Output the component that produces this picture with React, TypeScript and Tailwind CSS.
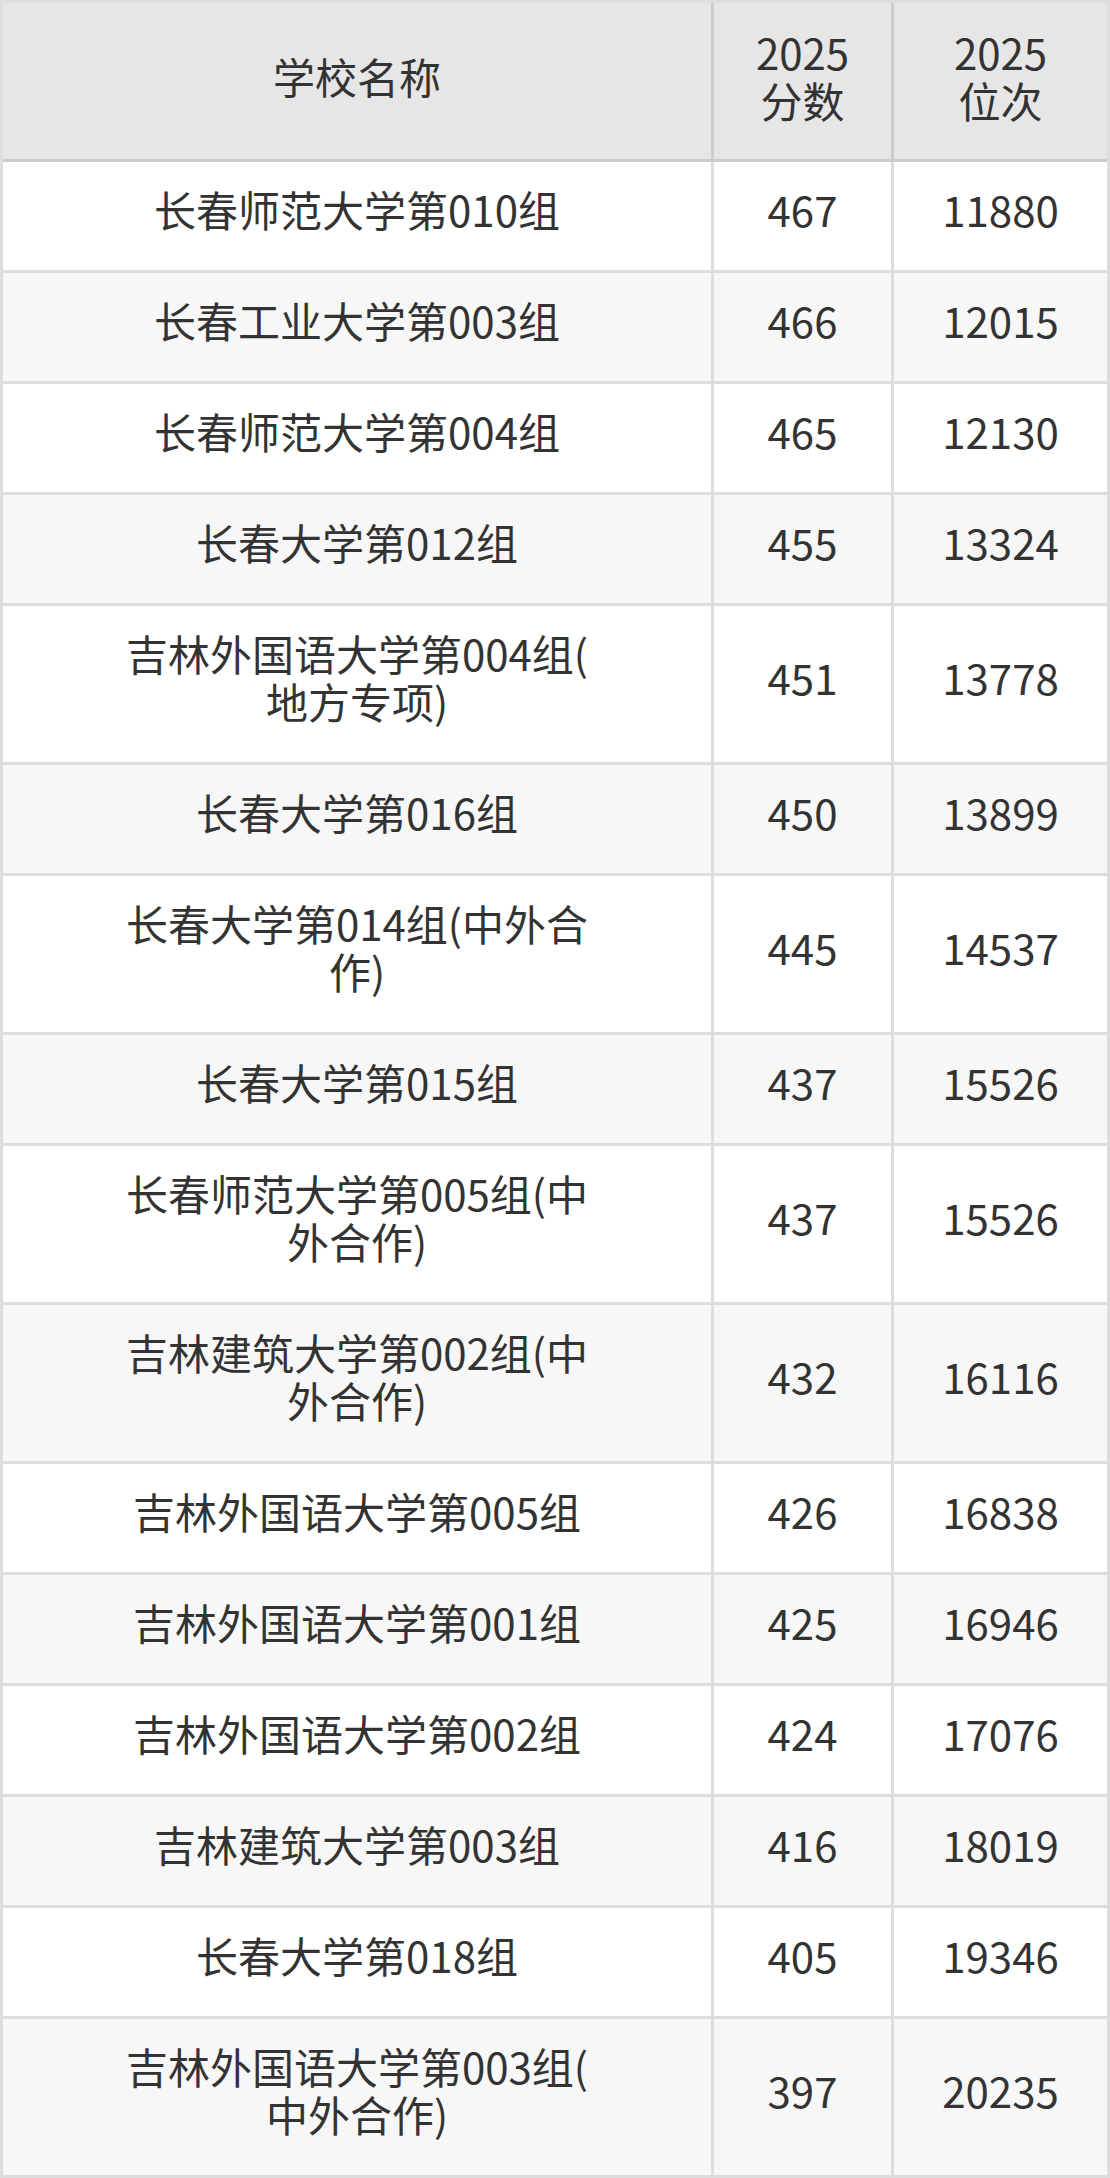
const rows: [string, string, string][] = [
  ["长春师范大学第010组", "467", "11880"],
  ["长春工业大学第003组", "466", "12015"],
  ["长春师范大学第004组", "465", "12130"],
  ["长春大学第012组", "455", "13324"],
  ["吉林外国语大学第004组(地方专项)", "451", "13778"],
  ["长春大学第016组", "450", "13899"],
  ["长春大学第014组(中外合作)", "445", "14537"],
  ["长春大学第015组", "437", "15526"],
  ["长春师范大学第005组(中外合作)", "437", "15526"],
  ["吉林建筑大学第002组(中外合作)", "432", "16116"],
  ["吉林外国语大学第005组", "426", "16838"],
  ["吉林外国语大学第001组", "425", "16946"],
  ["吉林外国语大学第002组", "424", "17076"],
  ["吉林建筑大学第003组", "416", "18019"],
  ["长春大学第018组", "405", "19346"],
  ["吉林外国语大学第003组(中外合作)", "397", "20235"],
];

const head = "flex items-center justify-center text-center pt-[25px] pb-[35px]";
const cell = "flex items-center justify-center text-center pt-[23px] pb-[37px]";

export default function App() {
  return (
    <div
      className="w-[1110px] border-x-[3px] border-t-[3px] border-[#dddddd] text-[42px] leading-[48px] text-[#333333]"
      style={{ fontFamily: '"Noto Sans CJK SC", "Noto Sans", sans-serif' }}
    >
      {/* header */}
      <div className="grid grid-cols-[711px_180px_213px] bg-[#e6e6e6] border-b-[3px] border-[#cccccc]">
        <div className={`${head} border-r-[3px] border-[#cccccc]`}>学校名称</div>
        <div className={`${head} border-r-[3px] border-[#cccccc]`}>
          2025
          <br />
          分数
        </div>
        <div className={head}>
          2025
          <br />
          位次
        </div>
      </div>

      {rows.map(([name, score, rank], i) => (
        <div
          key={i}
          className={`grid grid-cols-[711px_180px_213px] border-b-[3px] border-[#dddddd] ${
            i % 2 === 1 ? "bg-[#f7f7f7]" : "bg-white"
          }`}
        >
          <div className={`${cell} px-[114px] [line-break:anywhere] border-r-[3px] border-[#dddddd]`}>{name}</div>
          <div className={`${cell} border-r-[3px] border-[#dddddd]`}>{score}</div>
          <div className={cell}>{rank}</div>
        </div>
      ))}
    </div>
  );
}
